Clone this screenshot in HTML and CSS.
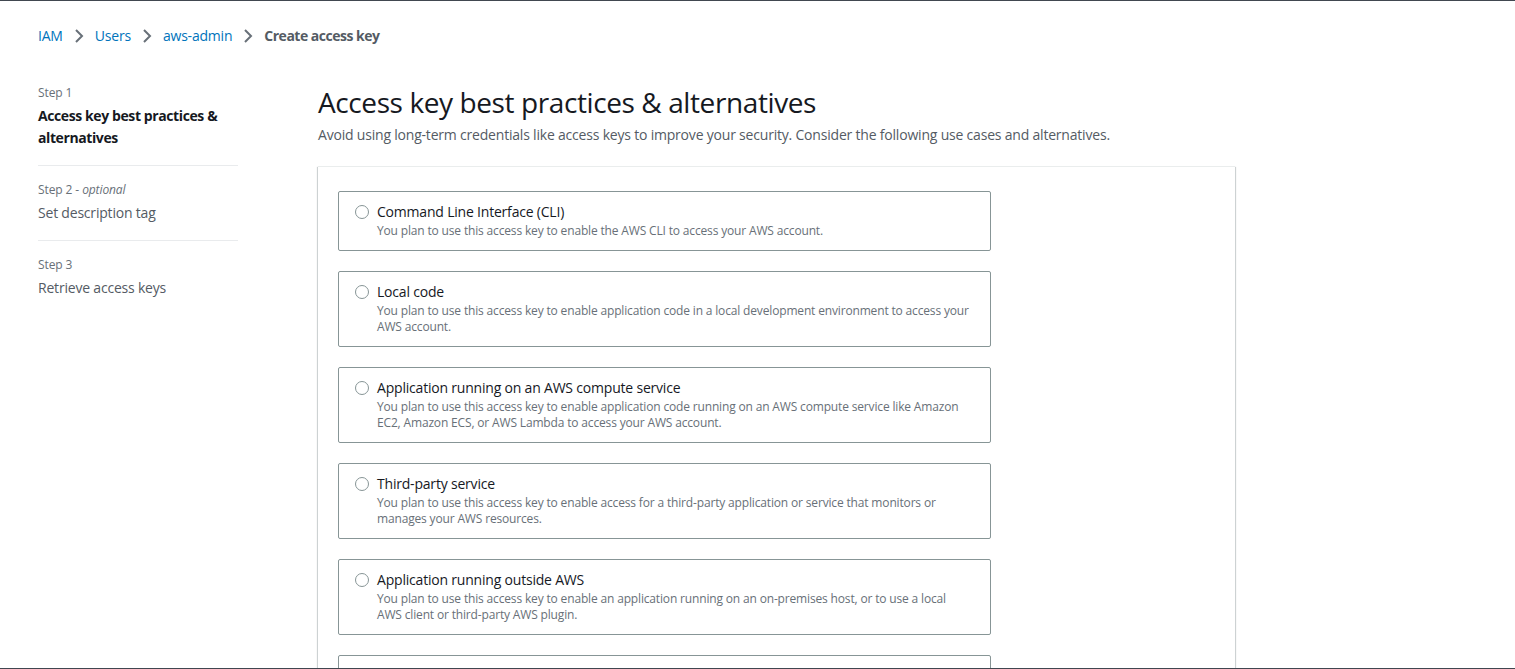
FILE: index.html
```html
<!DOCTYPE html>
<html lang="en">
<head>
<meta charset="utf-8">
<title>Create access key</title>
<link rel="stylesheet" href="styles.css">
</head>
<body>
<div class="frame"></div>
<nav class="breadcrumbs">
  <a class="crumb-link" href="#">IAM</a>
  <svg class="chev" viewBox="0 0 16 16"><path d="M5 2l6 6-6 6"/></svg>
  <a class="crumb-link" href="#">Users</a>
  <svg class="chev" viewBox="0 0 16 16"><path d="M5 2l6 6-6 6"/></svg>
  <a class="crumb-link" href="#">aws-admin</a>
  <svg class="chev" viewBox="0 0 16 16"><path d="M5 2l6 6-6 6"/></svg>
  <span class="crumb-current">Create access key</span>
</nav>
<div class="layout">
  <aside class="steps">
    <div class="step">
      <div class="step-label">Step 1</div>
      <div class="step-title active">Access key best practices &amp; alternatives</div>
    </div>
    <div class="step">
      <div class="step-label">Step 2 - <i>optional</i></div>
      <div class="step-title">Set description tag</div>
    </div>
    <div class="step last">
      <div class="step-label">Step 3</div>
      <div class="step-title">Retrieve access keys</div>
    </div>
  </aside>
  <main class="main">
    <h1 class="title">Access key best practices &amp; alternatives</h1>
    <p class="subtitle">Avoid using long-term credentials like access keys to improve your security. Consider the following use cases and alternatives.</p>
    <section class="container">
      <label class="tile">
        <span class="radio"></span>
        <span class="tile-text">
          <span class="tile-title">Command Line Interface (CLI)</span>
          <span class="tile-desc">You plan to use this access key to enable the AWS CLI to access your AWS account.</span>
        </span>
      </label>
      <label class="tile">
        <span class="radio"></span>
        <span class="tile-text">
          <span class="tile-title">Local code</span>
          <span class="tile-desc">You plan to use this access key to enable application code in a local development environment to access your AWS account.</span>
        </span>
      </label>
      <label class="tile">
        <span class="radio"></span>
        <span class="tile-text">
          <span class="tile-title">Application running on an AWS compute service</span>
          <span class="tile-desc">You plan to use this access key to enable application code running on an AWS compute service like Amazon EC2, Amazon ECS, or AWS Lambda to access your AWS account.</span>
        </span>
      </label>
      <label class="tile">
        <span class="radio"></span>
        <span class="tile-text">
          <span class="tile-title">Third-party service</span>
          <span class="tile-desc">You plan to use this access key to enable access for a third-party application or service that monitors or manages your AWS resources.</span>
        </span>
      </label>
      <label class="tile">
        <span class="radio"></span>
        <span class="tile-text">
          <span class="tile-title">Application running outside AWS</span>
          <span class="tile-desc">You plan to use this access key to enable an application running on an on-premises host, or to use a local AWS client or third-party AWS plugin.</span>
        </span>
      </label>
      <label class="tile">
        <span class="radio"></span>
        <span class="tile-text">
          <span class="tile-title">Other</span>
          <span class="tile-desc">Your use case is not listed here.</span>
        </span>
      </label>
    </section>
  </main>
</div>
</body>
</html>
```

FILE: styles.css
```css
* { box-sizing: border-box; }
html, body { margin: 0; padding: 0; }
body {
  font-family: "Open Sans", "Noto Sans", Arial, sans-serif;
  font-size: 14px;
  line-height: 22px;
  letter-spacing: -0.2px;
  color: #16191f;
  background: #fff;
  overflow: hidden;
  height: 669px;
}
.frame {
  position: fixed;
  inset: 0;
  border-top: 1px solid #414750;
  border-bottom: 1px solid #414750;
  pointer-events: none;
  z-index: 10;
}
.breadcrumbs {
  display: flex;
  align-items: center;
  padding: 26px 0 0 38px;
  height: 46px;
  line-height: 20px;
}
.crumb-link { color: #0073bb; text-decoration: none; }
.chev {
  width: 16px; height: 16px;
  margin: 0 8px;
  fill: none;
  stroke: #687078;
  stroke-width: 2;
}
.crumb-current { color: #545b64; font-weight: 700; letter-spacing: -0.5px; }
.layout {
  display: flex;
  gap: 80px;
  padding: 39px 0 0 38px;
}
.steps { width: 200px; flex: none; }
.step {
  padding: 0 0 16px;
  border-bottom: 1px solid #e9ebed;
  margin-bottom: 16px;
}
.step.last { border-bottom: none; }
.step-label {
  font-size: 12px;
  line-height: 16px;
  color: #687078;
  margin-bottom: 4px;
  letter-spacing: -0.1px;
}
.step-label i { color: #687078; }
.step-title { color: #545b64; }
.step-title.active { color: #16191f; font-weight: 700; letter-spacing: -0.4px; }
.main { width: 917px; flex: none; }
.title {
  margin: -1px 0 0;
  font-size: 28px;
  line-height: 36px;
  font-weight: 400;
  letter-spacing: -0.4px;
  color: #16191f;
}
.subtitle {
  margin: 4px 0 0;
  color: #545b64;
}
.container {
  margin-top: 20px;
  border-top: 1px solid #eaeded;
  box-shadow: 0 1px 1px 0 rgba(0,28,36,.3), 1px 1px 1px 0 rgba(0,28,36,.15), -1px 1px 1px 0 rgba(0,28,36,.15);
  padding: 24px 20px;
  display: flex;
  flex-direction: column;
  gap: 20px;
  height: 600px;
}
.tile {
  width: 653px;
  border: 1px solid #879596;
  border-radius: 2px;
  padding: 9px 19px 11px 16px;
  display: flex;
  gap: 8px;
  flex: none;
}
.radio {
  width: 14px; height: 14px;
  border: 1px solid #879596;
  border-radius: 50%;
  margin-top: 4px;
  flex: none;
}
.tile-text { display: flex; flex-direction: column; }
.tile-title { color: #16191f; }
.tile-desc { font-size: 12px; line-height: 16px; color: #687078; letter-spacing: -0.16px; }
```
